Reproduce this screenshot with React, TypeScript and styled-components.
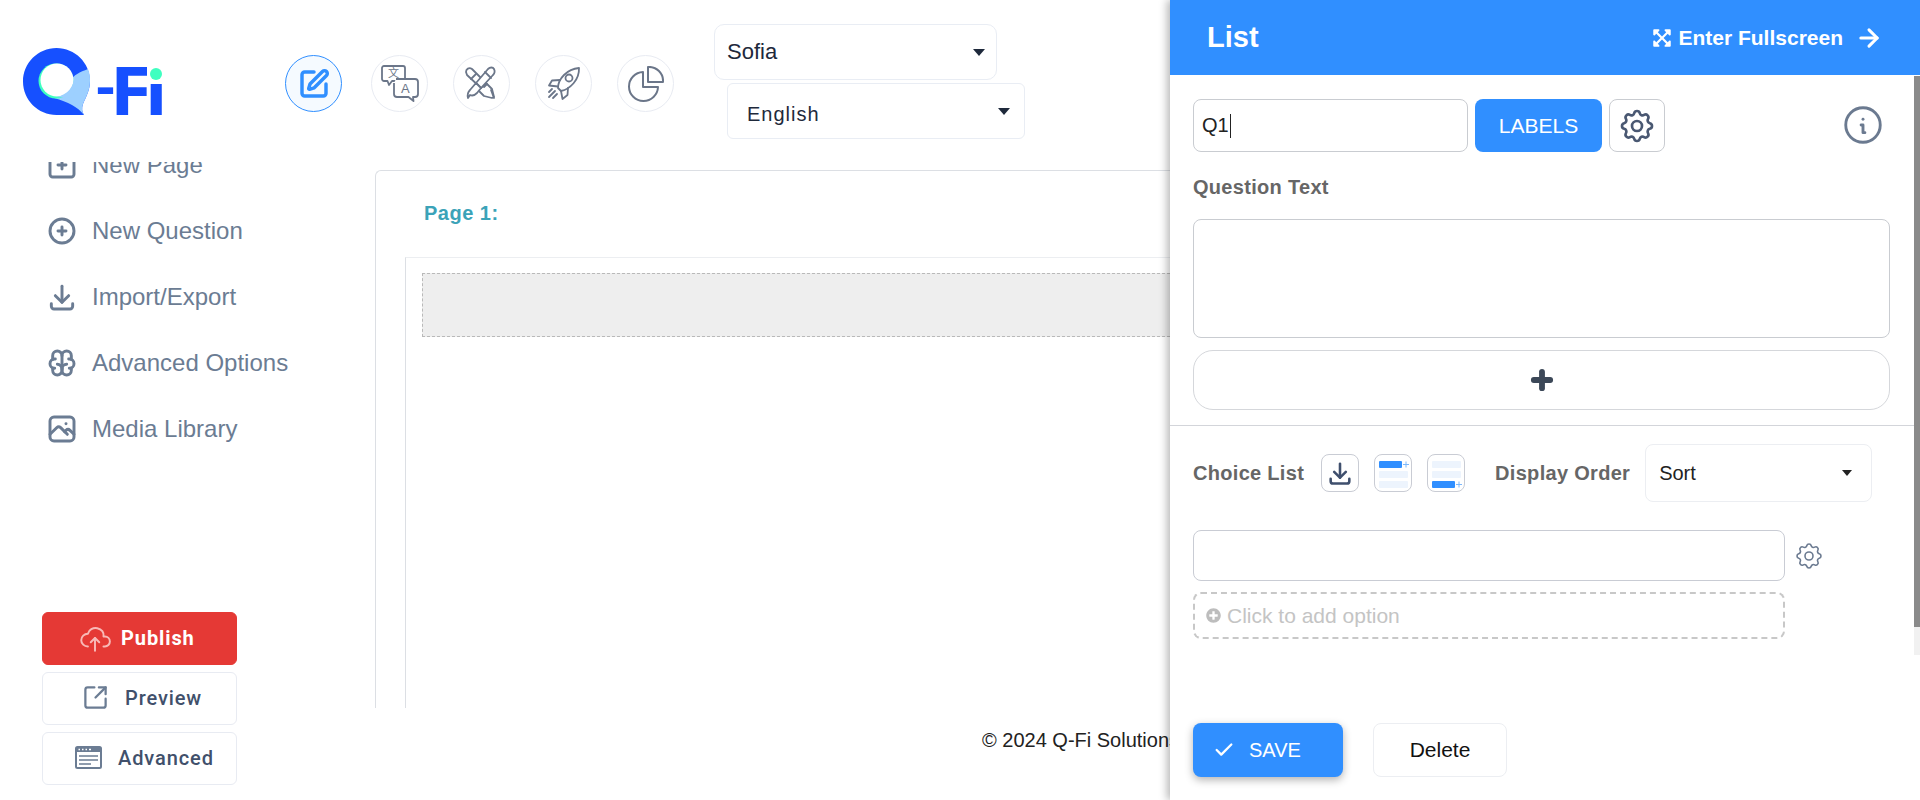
import React from "react";
import styled, { createGlobalStyle } from "styled-components";
import { ArrowRight, Check, Plus, SquareArrowOutUpRight, SquarePen } from "lucide-react";
import { FaExpandArrowsAlt, FaPlusCircle } from "react-icons/fa";
import {
  TbBrain,
  TbCirclePlus,
  TbCloudUpload,
  TbDownload,
  TbInfoCircle,
  TbPhoto,
  TbSettings,
  TbSquarePlus,
} from "react-icons/tb";

const GlobalStyle = createGlobalStyle`
  html, body { margin: 0; padding: 0; background: #fff; }
  body { font-family: "Liberation Sans", Arial, sans-serif; }
  * { box-sizing: border-box; }
`;

const Page = styled.div`
  position: relative;
  width: 1920px;
  height: 800px;
  overflow: hidden;
  background: #fff;
`;

const Header = styled.header`
  display: flex;
  align-items: flex-start;
  height: 162px;
  padding-left: 23px;
`;

const LogoWrap = styled.div`
  width: 140px;
  height: 67px;
  margin-top: 48px;
  flex: none;
`;

const LogoText = styled.text`
  font-family: Roboto, "Liberation Sans", sans-serif;
  font-weight: 900;
  font-size: 67px;
  fill: #1650ff;
`;

const NavIcons = styled.nav`
  display: flex;
  gap: 25px;
  margin: 55px 0 0 122px;
  & > :first-child {
    margin-right: 4px;
  }
`;

const NavCircle = styled.div<{ $active?: boolean }>`
  width: 57px;
  height: 57px;
  flex: none;
  border-radius: 50%;
  display: flex;
  align-items: center;
  justify-content: center;
  color: ${(p) => (p.$active ? "#308fff" : "#6b7689")};
  background: ${(p) => (p.$active ? "#f5faff" : "#fff")};
  border: ${(p) => (p.$active ? "1.5px solid #308fff" : "1.5px solid #e8ebf2")};
`;

const Selects = styled.div`
  display: flex;
  flex-direction: column;
  gap: 3px;
  margin: 24px 0 0 40px;
`;

const SelectBox = styled.div<{
  $w: number;
  $indent?: number;
  $pad: number;
  $size: number;
  $spacing?: number;
  $radius: number;
  $textDrop?: number;
  $caretRight: number;
}>`
  position: relative;
  display: flex;
  align-items: center;
  width: ${(p) => p.$w}px;
  height: 56px;
  margin-left: ${(p) => p.$indent ?? 0}px;
  padding-left: ${(p) => p.$pad}px;
  padding-top: ${(p) => p.$textDrop ?? 0}px;
  font-size: ${(p) => p.$size}px;
  letter-spacing: ${(p) => p.$spacing ?? 0}px;
  color: #1e293b;
  background: #fff;
  border: 1px solid #e9edf4;
  border-radius: ${(p) => p.$radius}px;
  &::after {
    content: "";
    position: absolute;
    right: ${(p) => p.$caretRight}px;
    top: 24px;
    border-left: 6px solid transparent;
    border-right: 6px solid transparent;
    border-top: 7px solid #1e293b;
  }
`;

const Body = styled.div`
  display: flex;
  height: 638px;
`;

const Sidebar = styled.aside`
  width: 375px;
  flex: none;
  display: flex;
  flex-direction: column;
`;

const MenuClip = styled.div`
  height: 450px;
  overflow: hidden;
`;

const Menu = styled.ul`
  list-style: none;
  margin: -30px 0 0;
  padding: 0 0 0 46px;
`;

const MenuItem = styled.li`
  display: flex;
  align-items: center;
  height: 66px;
  gap: 14px;
  font-size: 24px;
  color: #6b7c93;
  svg {
    width: 32px;
    height: 32px;
    flex: none;
    stroke-width: 2.2;
  }
`;

const Actions = styled.div`
  display: flex;
  flex-direction: column;
  gap: 7px;
  width: 195px;
  margin-left: 42px;
`;

const ActionButton = styled.div<{ $primary?: boolean; $offset: number }>`
  display: flex;
  align-items: center;
  height: 53px;
  gap: ${(p) => (p.$primary ? 9 : 16)}px;
  padding-left: ${(p) => p.$offset}px;
  padding-bottom: 2px;
  font-family: Roboto, "Liberation Sans", sans-serif;
  font-size: 20px;
  font-weight: ${(p) => (p.$primary ? 700 : 500)};
  letter-spacing: 0.9px;
  color: ${(p) => (p.$primary ? "#fff" : "#41506b")};
  background: ${(p) => (p.$primary ? "#e53935" : "#fff")};
  border: 1px solid ${(p) => (p.$primary ? "#e53935" : "#e8ebf2")};
  border-radius: 6px;
  svg {
    flex: none;
    color: ${(p) => (p.$primary ? "#f8b9b7" : "#6b7c93")};
  }
`;

const Main = styled.main`
  flex: 1;
  min-width: 0;
  display: flex;
  flex-direction: column;
`;

const Card = styled.section`
  height: 538px;
  margin-top: 8px;
  padding: 31px 0 0 29px;
  border-top: 1px solid #dcdfe4;
  border-left: 1px solid #dcdfe4;
  border-top-left-radius: 6px;
`;

const PageTitle = styled.div`
  margin: 0 0 0 19px;
  font-size: 20px;
  line-height: 22px;
  font-weight: 700;
  letter-spacing: 0.5px;
  color: #3ba3b8;
`;

const Canvas = styled.div`
  height: 451px;
  margin-top: 33px;
  padding: 15px 0 0 16px;
  border-top: 1px solid #eceef1;
  border-left: 1px solid #dcdfe4;
`;

const DropZone = styled.div`
  height: 64px;
  background: #eeeeee;
  border: 1px dashed #b9b9b9;
`;

const Footer = styled.footer`
  padding: 21px 0 0 607px;
  font-size: 20px;
  line-height: 22px;
  white-space: nowrap;
  color: #222;
`;

const Panel = styled.aside`
  position: absolute;
  top: 0;
  right: 0;
  bottom: 0;
  width: 750px;
  display: flex;
  flex-direction: column;
  background: #fff;
  box-shadow: -3px 0 8px rgba(0, 0, 0, 0.28);
`;

const PanelHeader = styled.div`
  display: flex;
  align-items: center;
  justify-content: space-between;
  height: 75px;
  flex: none;
  padding: 0 37px 0 37px;
  background: #308fff;
  color: #fff;
`;

const PanelTitle = styled.div`
  font-size: 29px;
  font-weight: 700;
`;

const FullscreenLink = styled.div`
  display: flex;
  align-items: center;
  font-size: 21px;
  font-weight: 700;
`;

const Section = styled.div`
  padding: 0 30px 0 23px;
`;

const TopRow = styled.div`
  display: flex;
  align-items: center;
  gap: 7px;
  margin-top: 24px;
`;

const Field = styled.div<{ $w?: number; $h: number }>`
  display: flex;
  align-items: center;
  width: ${(p) => (p.$w ? `${p.$w}px` : "100%")};
  height: ${(p) => p.$h}px;
  padding-left: 8px;
  font-size: 20px;
  color: #222;
  background: #fff;
  border: 1px solid #c9ccd1;
  border-radius: 8px;
`;

const Caret = styled.span`
  width: 1px;
  height: 24px;
  margin-left: 1px;
  background: #222;
`;

const LabelsButton = styled.div`
  display: flex;
  align-items: center;
  justify-content: center;
  width: 127px;
  height: 53px;
  font-size: 21px;
  color: #fff;
  background: #308fff;
  border-radius: 8px;
`;

const GearButton = styled.div`
  display: flex;
  align-items: center;
  justify-content: center;
  width: 56px;
  height: 53px;
  color: #4a5872;
  border: 1px solid #c9ccd1;
  border-radius: 8px;
`;

const InfoIcon = styled.div`
  display: flex;
  margin-left: auto;
  margin-right: 4px;
  margin-top: -2px;
  color: #6b7a90;
`;

const FieldLabel = styled.div`
  margin: 24px 0 21px;
  font-size: 20px;
  line-height: 22px;
  font-weight: 700;
  letter-spacing: 0.3px;
  color: #666;
`;

const TextBox = styled.div`
  height: 119px;
  border: 1px solid #c9ccd1;
  border-radius: 8px;
`;

const AddMedia = styled.div`
  display: flex;
  align-items: center;
  justify-content: center;
  height: 60px;
  margin-top: 12px;
  color: #3c4858;
  border: 1px solid #d5d7db;
  border-radius: 20px;
`;

const Divider = styled.hr`
  height: 1px;
  margin: 15px 0 18px;
  border: 0;
  background: #d3d5da;
`;

const ChoiceRow = styled.div`
  display: flex;
  align-items: center;
  height: 58px;
`;

const ChoiceLabel = styled.div<{ $left?: number }>`
  margin-left: ${(p) => p.$left ?? 0}px;
  font-size: 20px;
  font-weight: 700;
  letter-spacing: 0.3px;
  color: #666;
  white-space: nowrap;
`;

const SquareButton = styled.div<{ $left: number }>`
  display: flex;
  align-items: center;
  justify-content: center;
  width: 38px;
  height: 38px;
  margin-left: ${(p) => p.$left}px;
  flex: none;
  color: #3f4f6d;
  border: 1px solid #c9ccd4;
  border-radius: 8px;
`;

const OrderSelect = styled.div`
  position: relative;
  display: flex;
  align-items: center;
  width: 227px;
  height: 58px;
  margin-left: 15px;
  padding-left: 13px;
  font-size: 20px;
  color: #222;
  border: 1px solid #eceef2;
  border-radius: 8px;
  &::after {
    content: "";
    position: absolute;
    right: 19px;
    top: 25px;
    border-left: 5px solid transparent;
    border-right: 5px solid transparent;
    border-top: 6px solid #222;
  }
`;

const OptionRow = styled.div`
  display: flex;
  align-items: center;
  gap: 8px;
  margin-top: 28px;
  color: #6b7a90;
`;

const OptionInput = styled.div`
  width: 592px;
  height: 51px;
  border: 1px solid #c9ccd4;
  border-radius: 8px;
`;

const AddOption = styled.div`
  display: flex;
  align-items: center;
  gap: 6px;
  width: 592px;
  height: 47px;
  margin-top: 11px;
  padding-left: 11px;
  font-size: 21px;
  color: #c4c4c4;
  border: 2px dashed #c8c8c8;
  border-radius: 8px;
`;

const PanelFooter = styled.div`
  display: flex;
  gap: 30px;
  margin-top: auto;
  padding: 0 0 23px 23px;
`;

const SaveButton = styled.div`
  display: flex;
  align-items: center;
  gap: 14px;
  width: 150px;
  height: 54px;
  padding-left: 20px;
  font-size: 20px;
  color: #fff;
  background: #308fff;
  border-radius: 8px;
  box-shadow: 0 3px 8px rgba(0, 0, 0, 0.3);
`;

const DeleteButton = styled.div`
  display: flex;
  align-items: center;
  justify-content: center;
  width: 134px;
  height: 54px;
  font-size: 21px;
  color: #111;
  border: 1px solid #eceef2;
  border-radius: 8px;
`;

const Scrollbar = styled.div`
  position: absolute;
  top: 76px;
  right: 0;
  width: 6px;
  height: 579px;
  background: #f1f1f1;
  &::before {
    content: "";
    display: block;
    height: 551px;
    background: #8a8a8a;
  }
`;

const Logo = () => (
  <svg width="140" height="67" viewBox="0 0 140 67">
    <path d="M33.5 0C52 0 67 15 67 33C67 42 63 49 60 56C58.5 60 59 64 61 67L33.5 67C15 67 0 52 0 33.5C0 15 15 0 33.5 0Z" fill="#1650ff" />
    <path d="M65 21C67 26 67 29 67 33C67 42 63 49 60 56C58.5 60 59 64 61 67C55 59 45 54 31 50L48 33C50 27 57 24 65 21Z" fill="#9dd0ff" />
    <circle cx="33" cy="33" r="17.5" fill="#3fffc0" />
    <circle cx="34" cy="32" r="16.5" fill="#fff" />
    <path d="M51 29C51 38 45 47 33 49L50 50L54 30Z" fill="#9dd0ff" />
    <LogoText>
      <tspan x="71" y="59" fontSize="52">-</tspan>
      <tspan x="90" y="67">F</tspan>
      <tspan x="124" y="67">i</tspan>
    </LogoText>
    <rect x="124" y="8" width="16" height="28" fill="#fff" />
    <circle cx="133" cy="26" r="6" fill="#3fffc0" />
  </svg>
);

const TranslateIcon = () => (
  <svg width="38" height="37" viewBox="0 0 38 37" fill="none" stroke="currentColor" strokeWidth="1.8" strokeLinejoin="round">
    <path d="M3 1h19a2 2 0 0 1 2 2v11a2 2 0 0 1-2 2H11l-3 4-1.500-4H3a2 2 0 0 1-2-2V3a2 2 0 0 1 2-2Z" />
    <path d="M15 14h19a3 3 0 0 1 3 3v12a3 3 0 0 1-3 3h-2l.5 4-5-4H16a3 3 0 0 1-3-3V18" fill="#fff" />
    <text x="7" y="12" fontSize="11" fill="currentColor" stroke="none" fontFamily="'Noto Sans CJK SC', sans-serif">文</text>
    <text x="20" y="28" fontSize="13" fill="currentColor" stroke="none" fontFamily="'Liberation Sans', sans-serif">A</text>
  </svg>
);

const DesignIcon = () => (
  <svg width="36" height="36" viewBox="0 0 36 36" fill="none" stroke="currentColor" strokeWidth="1.8" strokeLinejoin="round" strokeLinecap="round">
    <path d="M2 6c0-3 3-5 6-3l14 14-5 5L3 9Z" />
    <path d="M7 13l5-5" />
    <path d="M23 18l5 5 2 8-2 1-8-2-5-5" />
    <path d="M20 21l3-3" />
    <path d="M30 32l-3-8" />
    <path d="M24 3c2-2 5-2 6 0s1 4-1 6L17 22l-5-5Z" fill="#fff" />
    <path d="M21 6l6 6" />
    <path d="M12 17l5 5-4 5c-2 2-5 3-7 2l-2 3c-1-4 0-6 2-8Z" fill="#fff" />
  </svg>
);

const RocketIcon = () => (
  <svg width="34" height="34" viewBox="0 0 34 34" fill="none" stroke="currentColor" strokeWidth="1.8" strokeLinejoin="round" strokeLinecap="round">
    <path d="M11 21C11 12 20 2 32 1c.5 12-9 21-18 23Z" />
    <circle cx="22" cy="11" r="3.500" />
    <path d="M13 13l-8 .5-3 5 9 1" />
    <path d="M21 21l-.5 7-5 4-1.500-8" />
    <path d="M8 24l-6 6M10 27l-4 4M5 22l-3 3" />
  </svg>
);

const PieIcon = () => (
  <svg width="36" height="36" viewBox="0 0 36 36" fill="none" stroke="currentColor" strokeWidth="2" strokeLinejoin="round">
    <path d="M15 6a14.500 14.500 0 1 0 15 15H15Z" />
    <path d="M20 1a14 14 0 0 1 15 15H20Z" />
  </svg>
);

const WindowIcon = () => (
  <svg width="27" height="23" viewBox="0 0 27 23" fill="none">
    <rect x="1" y="1" width="25" height="21" rx="1.500" stroke="#6b7c93" strokeWidth="2" />
    <rect x="1" y="1" width="25" height="5" fill="#6b7c93" />
    <path d="M3.500 3.500h1.500M7 3.500h1.500M10.500 3.500h1.500M14 3.500h2" stroke="#fff" strokeWidth="1.500" />
    <path d="M4 10h19M4 14h19M4 18h12" stroke="#6b7c93" strokeWidth="1.500" />
  </svg>
);

const ListIcon = ({ bottom }: { bottom?: boolean }) => (
  <svg width="36" height="36" viewBox="0 0 36 36">
    {[0, 1, 2].map((i) => {
      const active = bottom ? i === 2 : i === 0;
      return (
        <rect
          key={i}
          x="4"
          y={6 + i * 10}
          width={active ? 23 : 29}
          height="7"
          rx="1"
          fill={active ? "#308fff" : "#edf4fd"}
        />
      );
    })}
    <path d={bottom ? "M28 29.500h6M31 26.500v6" : "M28 9.500h6M31 6.500v6"} stroke="#7db8fb" strokeWidth="1" />
  </svg>
);

const menuItems = [
  { label: "New Page", icon: <TbSquarePlus /> },
  { label: "New Question", icon: <TbCirclePlus /> },
  { label: "Import/Export", icon: <TbDownload /> },
  { label: "Advanced Options", icon: <TbBrain /> },
  { label: "Media Library", icon: <TbPhoto /> },
];

export default function App() {
  return (
    <Page>
      <GlobalStyle />
      <Header>
        <LogoWrap>
          <Logo />
        </LogoWrap>
        <NavIcons>
          <NavCircle $active>
            <SquarePen size={32} strokeWidth={2.6} />
          </NavCircle>
          <NavCircle>
            <TranslateIcon />
          </NavCircle>
          <NavCircle>
            <DesignIcon />
          </NavCircle>
          <NavCircle>
            <RocketIcon />
          </NavCircle>
          <NavCircle>
            <PieIcon />
          </NavCircle>
        </NavIcons>
        <Selects>
          <SelectBox $w={283} $pad={12} $size={22} $radius={10} $caretRight={11}>
            Sofia
          </SelectBox>
          <SelectBox $w={298} $indent={13} $pad={19} $size={20} $spacing={1} $radius={6} $textDrop={7} $caretRight={14}>
            English
          </SelectBox>
        </Selects>
      </Header>
      <Body>
        <Sidebar>
          <MenuClip>
            <Menu>
              {menuItems.map((item) => (
                <MenuItem key={item.label}>
                  {item.icon}
                  {item.label}
                </MenuItem>
              ))}
            </Menu>
          </MenuClip>
          <Actions>
            <ActionButton $primary $offset={35}>
              <TbCloudUpload size={34} strokeWidth={1.4} />
              Publish
            </ActionButton>
            <ActionButton $offset={39}>
              <SquareArrowOutUpRight size={27} strokeWidth={2} />
              Preview
            </ActionButton>
            <ActionButton $offset={32}>
              <WindowIcon />
              Advanced
            </ActionButton>
          </Actions>
        </Sidebar>
        <Main>
          <Card>
            <PageTitle>Page 1:</PageTitle>
            <Canvas>
              <DropZone />
            </Canvas>
          </Card>
          <Footer>© 2024 Q-Fi Solutions. All rights reserved.</Footer>
        </Main>
      </Body>
      <Panel>
        <PanelHeader>
          <PanelTitle>List</PanelTitle>
          <FullscreenLink>
            <FaExpandArrowsAlt size={20} style={{ marginRight: 6 }} />
            Enter Fullscreen
            <ArrowRight size={28} strokeWidth={2.6} style={{ marginLeft: 12 }} />
          </FullscreenLink>
        </PanelHeader>
        <Section>
          <TopRow>
            <Field $w={275} $h={53}>
              Q1
              <Caret />
            </Field>
            <LabelsButton>LABELS</LabelsButton>
            <GearButton>
              <TbSettings size={40} strokeWidth={1.6} />
            </GearButton>
            <InfoIcon>
              <TbInfoCircle size={46} strokeWidth={1.5} />
            </InfoIcon>
          </TopRow>
          <FieldLabel>Question Text</FieldLabel>
          <TextBox />
          <AddMedia>
            <Plus size={28} strokeWidth={5} />
          </AddMedia>
        </Section>
        <Divider />
        <Section>
          <ChoiceRow>
            <ChoiceLabel>Choice List</ChoiceLabel>
            <SquareButton $left={17}>
              <TbDownload size={28} strokeWidth={2.2} />
            </SquareButton>
            <SquareButton $left={15}>
              <ListIcon />
            </SquareButton>
            <SquareButton $left={15}>
              <ListIcon bottom />
            </SquareButton>
            <ChoiceLabel $left={30}>Display Order</ChoiceLabel>
            <OrderSelect>Sort</OrderSelect>
          </ChoiceRow>
          <OptionRow>
            <OptionInput />
            <TbSettings size={32} strokeWidth={1.2} />
          </OptionRow>
          <AddOption>
            <FaPlusCircle size={15} color="#bdbdbd" />
            Click to add option
          </AddOption>
        </Section>
        <PanelFooter>
          <SaveButton>
            <Check size={22} strokeWidth={2.5} />
            SAVE
          </SaveButton>
          <DeleteButton>Delete</DeleteButton>
        </PanelFooter>
        <Scrollbar />
      </Panel>
    </Page>
  );
}
